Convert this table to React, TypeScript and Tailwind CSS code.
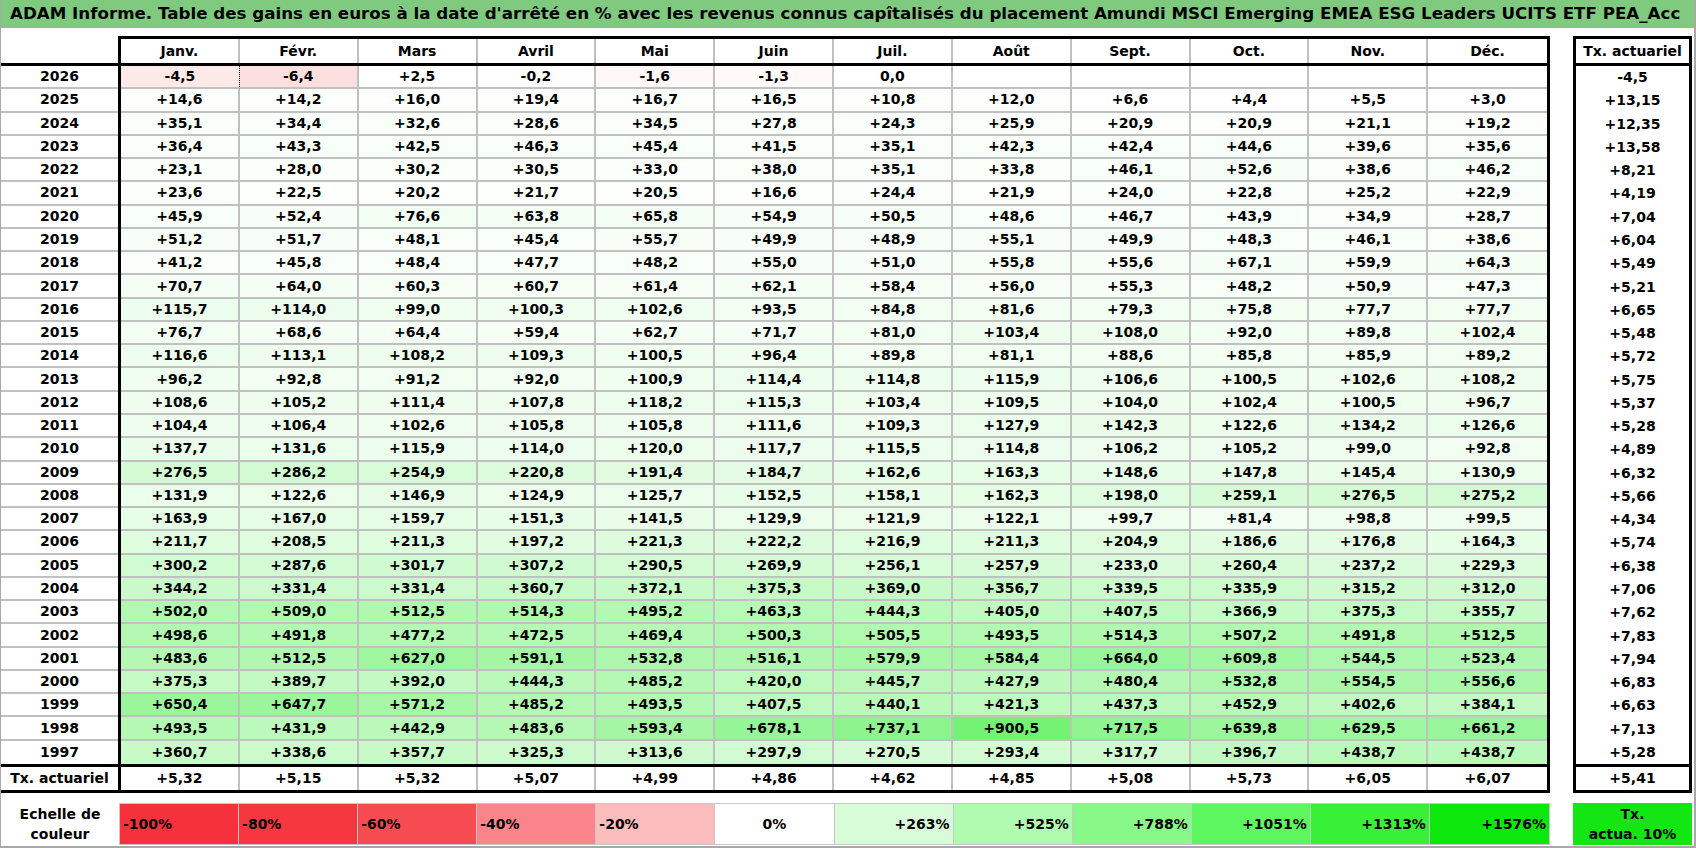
const MONTHS = ['Janv.', 'Févr.', 'Mars', 'Avril', 'Mai', 'Juin', 'Juil.', 'Août', 'Sept.', 'Oct.', 'Nov.', 'Déc.']

// year, 12 monthly values, tx. actuariel
const ROWS: [string, string[], string][] = [
  ['2026', ['-4,5', '-6,4', '+2,5', '-0,2', '-1,6', '-1,3', '0,0', '', '', '', '', ''], '-4,5'],
  ['2025', ['+14,6', '+14,2', '+16,0', '+19,4', '+16,7', '+16,5', '+10,8', '+12,0', '+6,6', '+4,4', '+5,5', '+3,0'], '+13,15'],
  ['2024', ['+35,1', '+34,4', '+32,6', '+28,6', '+34,5', '+27,8', '+24,3', '+25,9', '+20,9', '+20,9', '+21,1', '+19,2'], '+12,35'],
  ['2023', ['+36,4', '+43,3', '+42,5', '+46,3', '+45,4', '+41,5', '+35,1', '+42,3', '+42,4', '+44,6', '+39,6', '+35,6'], '+13,58'],
  ['2022', ['+23,1', '+28,0', '+30,2', '+30,5', '+33,0', '+38,0', '+35,1', '+33,8', '+46,1', '+52,6', '+38,6', '+46,2'], '+8,21'],
  ['2021', ['+23,6', '+22,5', '+20,2', '+21,7', '+20,5', '+16,6', '+24,4', '+21,9', '+24,0', '+22,8', '+25,2', '+22,9'], '+4,19'],
  ['2020', ['+45,9', '+52,4', '+76,6', '+63,8', '+65,8', '+54,9', '+50,5', '+48,6', '+46,7', '+43,9', '+34,9', '+28,7'], '+7,04'],
  ['2019', ['+51,2', '+51,7', '+48,1', '+45,4', '+55,7', '+49,9', '+48,9', '+55,1', '+49,9', '+48,3', '+46,1', '+38,6'], '+6,04'],
  ['2018', ['+41,2', '+45,8', '+48,4', '+47,7', '+48,2', '+55,0', '+51,0', '+55,8', '+55,6', '+67,1', '+59,9', '+64,3'], '+5,49'],
  ['2017', ['+70,7', '+64,0', '+60,3', '+60,7', '+61,4', '+62,1', '+58,4', '+56,0', '+55,3', '+48,2', '+50,9', '+47,3'], '+5,21'],
  ['2016', ['+115,7', '+114,0', '+99,0', '+100,3', '+102,6', '+93,5', '+84,8', '+81,6', '+79,3', '+75,8', '+77,7', '+77,7'], '+6,65'],
  ['2015', ['+76,7', '+68,6', '+64,4', '+59,4', '+62,7', '+71,7', '+81,0', '+103,4', '+108,0', '+92,0', '+89,8', '+102,4'], '+5,48'],
  ['2014', ['+116,6', '+113,1', '+108,2', '+109,3', '+100,5', '+96,4', '+89,8', '+81,1', '+88,6', '+85,8', '+85,9', '+89,2'], '+5,72'],
  ['2013', ['+96,2', '+92,8', '+91,2', '+92,0', '+100,9', '+114,4', '+114,8', '+115,9', '+106,6', '+100,5', '+102,6', '+108,2'], '+5,75'],
  ['2012', ['+108,6', '+105,2', '+111,4', '+107,8', '+118,2', '+115,3', '+103,4', '+109,5', '+104,0', '+102,4', '+100,5', '+96,7'], '+5,37'],
  ['2011', ['+104,4', '+106,4', '+102,6', '+105,8', '+105,8', '+111,6', '+109,3', '+127,9', '+142,3', '+122,6', '+134,2', '+126,6'], '+5,28'],
  ['2010', ['+137,7', '+131,6', '+115,9', '+114,0', '+120,0', '+117,7', '+115,5', '+114,8', '+106,2', '+105,2', '+99,0', '+92,8'], '+4,89'],
  ['2009', ['+276,5', '+286,2', '+254,9', '+220,8', '+191,4', '+184,7', '+162,6', '+163,3', '+148,6', '+147,8', '+145,4', '+130,9'], '+6,32'],
  ['2008', ['+131,9', '+122,6', '+146,9', '+124,9', '+125,7', '+152,5', '+158,1', '+162,3', '+198,0', '+259,1', '+276,5', '+275,2'], '+5,66'],
  ['2007', ['+163,9', '+167,0', '+159,7', '+151,3', '+141,5', '+129,9', '+121,9', '+122,1', '+99,7', '+81,4', '+98,8', '+99,5'], '+4,34'],
  ['2006', ['+211,7', '+208,5', '+211,3', '+197,2', '+221,3', '+222,2', '+216,9', '+211,3', '+204,9', '+186,6', '+176,8', '+164,3'], '+5,74'],
  ['2005', ['+300,2', '+287,6', '+301,7', '+307,2', '+290,5', '+269,9', '+256,1', '+257,9', '+233,0', '+260,4', '+237,2', '+229,3'], '+6,38'],
  ['2004', ['+344,2', '+331,4', '+331,4', '+360,7', '+372,1', '+375,3', '+369,0', '+356,7', '+339,5', '+335,9', '+315,2', '+312,0'], '+7,06'],
  ['2003', ['+502,0', '+509,0', '+512,5', '+514,3', '+495,2', '+463,3', '+444,3', '+405,0', '+407,5', '+366,9', '+375,3', '+355,7'], '+7,62'],
  ['2002', ['+498,6', '+491,8', '+477,2', '+472,5', '+469,4', '+500,3', '+505,5', '+493,5', '+514,3', '+507,2', '+491,8', '+512,5'], '+7,83'],
  ['2001', ['+483,6', '+512,5', '+627,0', '+591,1', '+532,8', '+516,1', '+579,9', '+584,4', '+664,0', '+609,8', '+544,5', '+523,4'], '+7,94'],
  ['2000', ['+375,3', '+389,7', '+392,0', '+444,3', '+485,2', '+420,0', '+445,7', '+427,9', '+480,4', '+532,8', '+554,5', '+556,6'], '+6,83'],
  ['1999', ['+650,4', '+647,7', '+571,2', '+485,2', '+493,5', '+407,5', '+440,1', '+421,3', '+437,3', '+452,9', '+402,6', '+384,1'], '+6,63'],
  ['1998', ['+493,5', '+431,9', '+442,9', '+483,6', '+593,4', '+678,1', '+737,1', '+900,5', '+717,5', '+639,8', '+629,5', '+661,2'], '+7,13'],
  ['1997', ['+360,7', '+338,6', '+357,7', '+325,3', '+313,6', '+297,9', '+270,5', '+293,4', '+317,7', '+396,7', '+438,7', '+438,7'], '+5,28'],
]

const TX_ROW = ['+5,32', '+5,15', '+5,32', '+5,07', '+4,99', '+4,86', '+4,62', '+4,85', '+5,08', '+5,73', '+6,05', '+6,07']

// color scale : 0 white -> +1576% green, negatives -> pink
function cellColor(s: string) {
  if (!s) return '#ffffff'
  const v = parseFloat(s.replace(',', '.'))
  if (v >= 0) {
    const t = Math.min(v / 1576, 1)
    const r = Math.round(255 - 243 * t)
    const g = Math.round(255 - 23 * t)
    return `rgb(${r},${g},${r})`
  }
  const t = Math.min(-v / 20, 1)
  return `rgb(${Math.round(255 - 5 * t)},${Math.round(255 - 100 * t)},${Math.round(255 - 98 * t)})`
}

const SCALE = [
  { label: '-100%', cls: 'bg-[#f5323b] justify-start pl-[3px]' },
  { label: '-80%', cls: 'bg-[#f7373f] justify-start pl-[3px]' },
  { label: '-60%', cls: 'bg-[#f74b52] justify-start pl-[3px]' },
  { label: '-40%', cls: 'bg-[#f9858a] justify-start pl-[3px]' },
  { label: '-20%', cls: 'bg-[#fbbcbe] justify-start pl-[3px]' },
  { label: '0%', cls: 'bg-white justify-center' },
  { label: '+263%', cls: 'bg-[#d8fcd8] justify-end pr-[3px]' },
  { label: '+525%', cls: 'bg-[#b1fbb1] justify-end pr-[3px]' },
  { label: '+788%', cls: 'bg-[#88f988] justify-end pr-[3px]' },
  { label: '+1051%', cls: 'bg-[#5ef65e] justify-end pr-[3px]' },
  { label: '+1313%', cls: 'bg-[#38f038] justify-end pr-[3px]' },
  { label: '+1576%', cls: 'bg-[#0ce80c] justify-end pr-[3px]' },
]

function MainTable() {
  return (
    <div className="w-[1549px] flex flex-col">
      {/* header */}
      <div className="flex h-[27px]">
        <div className="w-[117px]" />
        <div className="w-[1432px] border-x-[3px] border-t-[3px] border-black grid grid-cols-12">
          {MONTHS.map((m, i) => (
            <div key={m} className={`flex items-center justify-center ${i < 11 ? 'border-r-2 border-[#c0c0c0]' : ''}`}>
              {m}
            </div>
          ))}
        </div>
      </div>
      <div className="h-[3px] bg-black" />

      {/* years */}
      <div className="h-[698px] grid grid-rows-[repeat(30,1fr)]">
        {ROWS.map(([year, vals], r) => (
          <div key={year} className="flex min-h-0">
            <div className={`w-[117px] flex items-center justify-center ${r < 29 ? 'border-b-2 border-[#c0c0c0]' : ''}`}>{year}</div>
            <div className="w-[1432px] border-x-[3px] border-black grid grid-cols-12">
              {vals.map((v, i) => (
                <div
                  key={i}
                  style={{ backgroundColor: cellColor(v) }}
                  className={`flex items-center justify-center border-[#c0c0c0] ${r < 29 ? 'border-b-2' : ''} ${
                    r === 0 && i === 0
                      ? 'border-r border-r-black [border-right-style:dotted]'
                      : i < 11
                        ? 'border-r-2'
                        : ''
                  }`}
                >
                  {v}
                </div>
              ))}
            </div>
          </div>
        ))}
      </div>
      <div className="h-[3px] bg-black" />

      {/* tx. actuariel */}
      <div className="flex h-[23px]">
        <div className="w-[117px] flex items-center justify-center">Tx. actuariel</div>
        <div className="w-[1432px] border-x-[3px] border-black grid grid-cols-12">
          {TX_ROW.map((v, i) => (
            <div key={i} className={`flex items-center justify-center ${i < 11 ? 'border-r-2 border-[#c0c0c0]' : ''}`}>
              {v}
            </div>
          ))}
        </div>
      </div>
      <div className="h-[3px] bg-black" />
    </div>
  )
}

function TxColumn() {
  return (
    <div className="ml-[23px] w-[119px] border-[3px] border-black flex flex-col">
      <div className="h-[24px] flex items-center justify-center">Tx. actuariel</div>
      <div className="h-[3px] bg-black" />
      <div className="h-[698px] grid grid-rows-[repeat(30,1fr)]">
        {ROWS.map(([year, , tx]) => (
          <div key={year} className="flex items-center justify-center">{tx}</div>
        ))}
      </div>
      <div className="h-[3px] bg-black" />
      <div className="h-[23px] flex items-center justify-center">+5,41</div>
    </div>
  )
}

function ScaleRow() {
  return (
    <div className="mt-[10px] flex h-[42px]">
      <div className="w-[118px] flex flex-col items-center justify-center leading-[20px]">
        <span>Echelle de</span>
        <span>couleur</span>
      </div>
      <div className="w-[1431px] grid grid-cols-12 border border-[#c8c8c8]">
        {SCALE.map((s, i) => (
          <div key={s.label} className={`flex items-center ${s.cls} ${i < 11 ? 'border-r border-[#c8c8c8]' : ''}`}>
            {s.label}
          </div>
        ))}
      </div>
      <div className="ml-[23px] w-[119px] bg-[#14e614] flex flex-col items-center justify-center leading-[20px]">
        <span>Tx.</span>
        <span>actua. 10%</span>
      </div>
    </div>
  )
}

export default function App() {
  return (
    <div className="w-[1696px] h-[848px] bg-white overflow-hidden border-l border-r-2 border-b-2 border-[#a8a8a8] font-['DejaVu_Sans',sans-serif] font-bold text-[14px] text-black">
      <div className="h-[28px] bg-[#7fca7f] pl-[9px] flex items-center whitespace-nowrap overflow-hidden text-[16.7px]">
        ADAM Informe. Table des gains en euros à la date d'arrêté en % avec les revenus connus capîtalisés du placement Amundi MSCI Emerging EMEA ESG Leaders UCITS ETF PEA_Acc
      </div>
      <div className="mt-[8px] flex">
        <MainTable />
        <TxColumn />
      </div>
      <ScaleRow />
    </div>
  )
}
